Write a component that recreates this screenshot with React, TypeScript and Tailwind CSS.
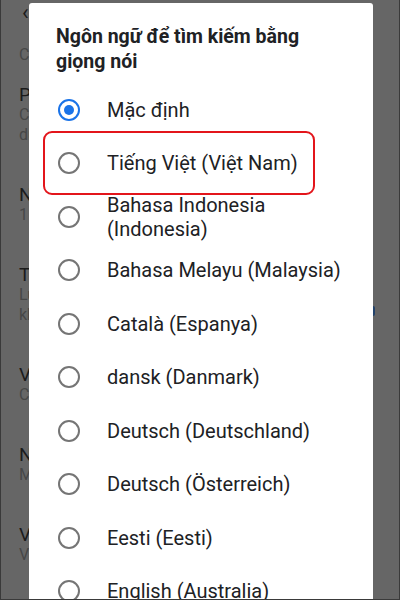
import React from 'react';

const languages = [
  'Tiếng Việt (Việt Nam)',
  'Bahasa Indonesia (Indonesia)',
  'Bahasa Melayu (Malaysia)',
  'Català (Espanya)',
  'dansk (Danmark)',
  'Deutsch (Deutschland)',
  'Deutsch (Österreich)',
  'Eesti (Eesti)',
  'English (Australia)',
];

const settings = [
  { title: 'Phản hồi', sub: ['Chỉ phát', 'dùng tai'] },
  { title: 'Nhận dạng', sub: ['1 ngôn'] },
  { title: 'Tự động', sub: ['Luôn bật', 'khi có'] },
  { title: 'Voice', sub: ['Chưa có'] },
  { title: 'Nhận', sub: ['Mặc định'] },
  { title: 'Văn bản', sub: ['Văn bản'] },
];

const Radio = ({ checked }: { checked?: boolean }) =>
  checked ? (
    <span className="flex h-[22px] w-[22px] shrink-0 items-center justify-center rounded-full border-[2.5px] border-[#1a73e8]">
      <span className="h-[10px] w-[10px] rounded-full bg-[#1a73e8]" />
    </span>
  ) : (
    <span className="h-[22px] w-[22px] shrink-0 rounded-full border-2 border-[#757575]" />
  );

const App = () => {
  return (
    <div className="relative h-[600px] w-[400px] overflow-hidden border-x border-b border-[#3a3a3a] bg-[#666666] font-['Roboto','Noto_Sans',sans-serif]">
      {/* settings screen behind the dim, only its left edge shows */}
      <div className="flex w-[28px] flex-col overflow-hidden pl-[18px] whitespace-nowrap">
        <div className="flex h-[24px] items-center pl-[3px] pt-[2px] text-[22px] leading-none text-[#1b1b1b]">‹</div>
        <div className="pt-[21px] text-[16px] leading-5 text-[#474747]">Chọn</div>
        {settings.map((s) => (
          <div key={s.title} className="flex flex-col py-5">
            <div className="text-[19px] leading-5 text-[#1b1b1b]">{s.title}</div>
            {s.sub.map((line) => (
              <div key={line} className="text-[16px] leading-5 text-[#474747]">
                {line}
              </div>
            ))}
          </div>
        ))}
      </div>
      <span className="absolute left-[370px] top-[306px] h-[10px] w-[4px] rounded-full bg-[#22426b]" />

      {/* dialog */}
      <div className="absolute bottom-0 left-[28px] top-[3px] flex w-[344px] flex-col rounded-t-[3px] bg-white">
        <h2 className="pl-[27px] pr-4 pt-[21px] text-[19.5px] font-bold leading-[25px] text-[#202124]">
          Ngôn ngữ để tìm kiếm bằng
          <br />
          giọng nói
        </h2>
        <ul className="mt-[9px] flex flex-col">
          <li className="flex h-[53.5px] items-center gap-[27px] pl-[29px]">
            <Radio checked />
            <span className="text-[20px] leading-6 text-[#202124]">Mặc định</span>
          </li>
          {languages.map((lang) => (
            <li key={lang} className="flex h-[53.5px] items-center gap-[27px] pl-[29px]">
              <Radio />
              <span className="w-[250px] text-[20px] leading-6 text-[#202124]">{lang}</span>
            </li>
          ))}
        </ul>
      </div>

      {/* highlight */}
      <div className="absolute left-[42px] top-[131px] h-[64px] w-[272px] rounded-[9px] border-[2.5px] border-[#e3151b]" />
    </div>
  );
};

export default App;
